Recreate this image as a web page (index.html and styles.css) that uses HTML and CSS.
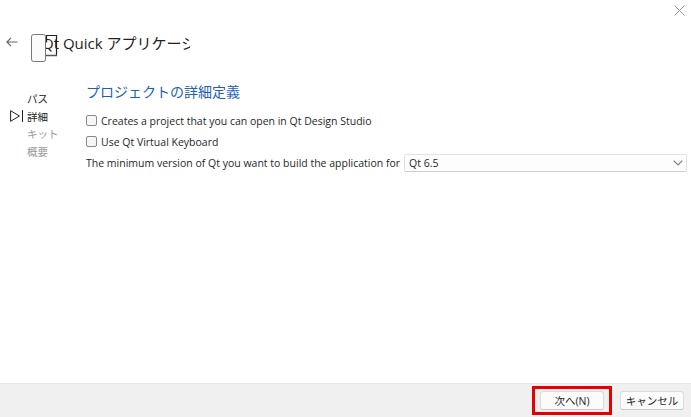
FILE: index.html
```html
<!DOCTYPE html>
<html lang="ja">
<head>
<meta charset="utf-8">
<title>Qt Quick アプリケーション</title>
<link rel="stylesheet" href="styles.css">
</head>
<body>
<div class="window">
  <svg class="close" width="11" height="11" viewBox="0 0 11 11"><path d="M.5.5l10 10M10.5.5l-10 10" stroke="#9a9a9a" stroke-width="1" fill="none"/></svg>
  <header class="head">
    <svg class="back" width="12" height="10" viewBox="0 0 12 10"><path d="M11.5 5H1M5 .8L.9 5 5 9.2" stroke="#666" stroke-width="1.2" fill="none"/></svg>
    <div class="title-clip"><span class="title">Qt Quick アプリケーション</span></div>
    <svg class="device" width="28" height="30" viewBox="0 0 28 30"><path d="M15.5 8.500V1.500H25.500V21.500" stroke="#222" stroke-width="1.200" fill="none" transform="translate(0 0)"/><path d="M15 21.500H26" stroke="#555" stroke-width="1.500"/><rect x=".5" y=".5" width="14" height="27" rx="2" fill="#fbfbfb" stroke="#777"/></svg>
  </header>
  <div class="body">
    <nav class="steps">
      <svg class="marker" width="14" height="12" viewBox="0 0 14 12"><path d="M.6.7L9.500 6 .6 11.300Z" fill="none" stroke="#222"/><path d="M12.500 0V12" stroke="#222"/></svg>
      <div class="step done">パス</div>
      <div class="step done">詳細</div>
      <div class="step">キット</div>
      <div class="step">概要</div>
    </nav>
    <main class="content">
      <h1 class="heading">プロジェクトの詳細定義</h1>
      <label class="check"><span class="box"></span>Creates a project that you can open in Qt Design Studio</label>
      <label class="check"><span class="box"></span>Use Qt Virtual Keyboard</label>
      <div class="version">
        <span>The minimum version of Qt you want to build the application for</span>
        <div class="select"><span>Qt 6.5</span>
          <svg width="10" height="6" viewBox="0 0 10 6"><path d="M.7.7L5 5l4.300-4.300" stroke="#777" stroke-width="1.100" fill="none"/></svg>
        </div>
      </div>
    </main>
  </div>
  <footer class="foot">
    <div class="next-wrap"><button class="btn">次へ(N)</button></div>
    <button class="btn cancel">キャンセル</button>
  </footer>
</div>
</body>
</html>
```
FILE: styles.css
```css
* { box-sizing: border-box; }
html, body { margin: 0; height: 100%; }
body { background: #fff; font-family: "Open Sans", "Noto Sans CJK JP", sans-serif; font-size: 10.500px; color: #1f1f1f; overflow: hidden; }
.window { position: relative; width: 691px; height: 417px; display: flex; flex-direction: column; }
.close { position: absolute; left: 674px; top: 5px; }
.head { position: relative; height: 83px; flex: none; padding: 33px 0 0 6px; display: flex; align-items: flex-start; }
.back { margin-top: 4px; flex: none; }
.title-clip { margin-left: 24px; width: 148px; overflow: hidden; white-space: nowrap; }
.title { font-size: 15px; line-height: 20px; color: #222; display: block; }
.device { position: absolute; left: 31px; top: 34px; }
.body { flex: 1; display: flex; }
.steps { position: relative; width: 86px; padding: 8px 0 0 27px; flex: none; }
.marker { position: absolute; left: 10px; top: 27px; }
.step { height: 17.500px; line-height: 17px; color: #9a9a9a; font-size: 10.500px; }
.step.done { color: #222; }
.content { flex: 1; padding-right: 4px; }
.heading { margin: 0 0 9px; font-size: 14px; line-height: 18px; font-weight: 400; color: #1f5fb8; }
.check { display: flex; align-items: center; height: 21px; white-space: nowrap; }
.box { width: 11px; height: 11px; margin-right: 4px; border: 1px solid #8a8a8a; border-radius: 2px; background: #f6f6f6; flex: none; }
.version { display: flex; align-items: center; gap: 4px; height: 22px; white-space: nowrap; }
.select { flex: 1; height: 18px; display: flex; align-items: center; justify-content: space-between; padding: 0 3px 0 4px; background: #fdfdfd; border: 1px solid #e2e2e2; border-bottom-color: #cfcfcf; border-radius: 2px; }
.foot { height: 34px; flex: none; background: #f0f0f0; border-top: 1px solid #e6e6e6; display: flex; align-items: center; justify-content: flex-end; gap: 8px; padding: 0 7px 0 0; }
.next-wrap { padding: 3px 5px; border: 3px solid #e60000; height: 29px; display: flex; align-items: center; }
.btn { font: inherit; color: #1f1f1f; width: 64px; height: 19px; padding: 0; background: #fbfbfb; border: 1px solid #dcdcdc; border-bottom-color: #c8c8c8; border-radius: 3px; }
```
